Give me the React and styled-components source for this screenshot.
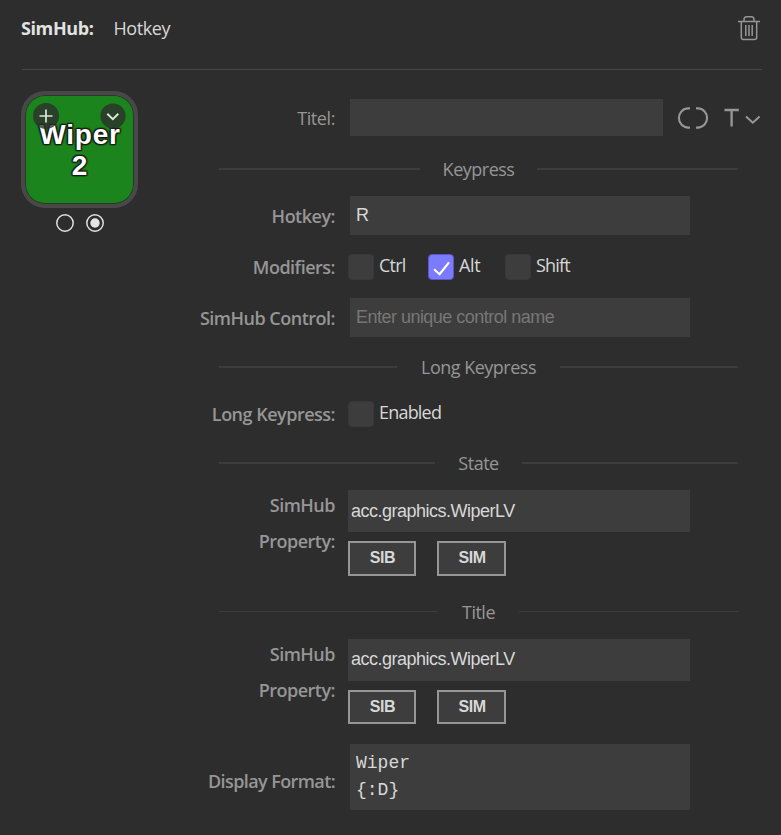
import React from "react";
import styled, { createGlobalStyle } from "styled-components";

const Global = createGlobalStyle`
  *, *::before, *::after { box-sizing: border-box; }
  body { margin: 0; background: #2d2d2d; }
`;

const ui = `"Segoe UI", "Open Sans", "Noto Sans", sans-serif`;
const arial = `"Liberation Sans", Arial, sans-serif`;

const Panel = styled.main`
  width: 781px;
  height: 835px;
  overflow: hidden;
  background: #2d2d2d;
  color: #d8d8d8;
  font: 400 18px/24px ${ui};
`;

const Header = styled.header`
  display: flex;
  align-items: center;
  height: 70px;
  margin: 0 19px 0 22px;
  padding-bottom: 13px;
  border-bottom: 1px solid #484848;
`;

const Plugin = styled.h1`
  margin: 0 20px 0 -1px;
  color: #e2e2e2;
  font: 700 18px/24px ${ui};
  letter-spacing: -0.4px;
`;

const Action = styled.span`
  flex: 1;
  font-size: 18px;
  letter-spacing: -0.4px;
`;

const Trash = styled.svg`
  width: 24px;
  height: 26px;
  margin-right: 1px;
`;

const Body = styled.div`
  display: flex;
`;

const Preview = styled.aside`
  width: 117px;
  margin: 21px 0 0 21px;
  display: flex;
  flex-direction: column;
  align-items: center;
`;

const Key = styled.div`
  position: relative;
  width: 117px;
  height: 117px;
  padding: 24px 0 0 1px;
  border: 4px solid #484848;
  border-radius: 24px;
  background: #1c841c;
  box-shadow: inset 0 0 0 1px #2d352d;
  color: #fff;
  text-align: center;
  font: 700 28px/31px ${arial};
  letter-spacing: 0.75px;
  white-space: pre-line;
  text-shadow: 0 0 2px #111, 0 0 2px #111, 0 0 2px #111, 1px 1px 1px #222, -1px -1px 1px #222,
    1px -1px 1px #222, -1px 1px 1px #222;
`;

const KeyBadge = styled.svg`
  position: absolute;
  top: 8px;
  ${(p) => p.$side}: 8px;
  width: 26px;
  height: 26px;
`;

const States = styled.div`
  display: flex;
  gap: 12px;
  margin-top: 6px;
`;

const StateDot = styled.svg`
  width: 18px;
  height: 18px;
`;

const Form = styled.section`
  width: 643px;
  padding-top: 29px;
`;

const Row = styled.div`
  display: flex;
  align-items: ${(p) => (p.$top ? "flex-start" : "center")};
  height: ${(p) => p.$h}px;
  margin-top: ${(p) => p.$mt || 0}px;
`;

const Label = styled.label`
  width: 197px;
  padding-top: ${(p) => p.$pt ?? 1}px;
  margin-top: ${(p) => p.$mt || 0}px;
  margin-right: ${(p) => p.$gap ?? 15}px;
  color: #969696;
  text-align: right;
  font-size: 18px;
  line-height: ${(p) => p.$lh || 24}px;
  font-weight: ${(p) => (p.$light ? 400 : 600)};
  letter-spacing: ${(p) => p.$ls ?? -0.5}px;
  white-space: pre-line;
`;

const Input = styled.input`
  width: ${(p) => p.$w || 340}px;
  height: 100%;
  padding: 0 6px;
  border: 0;
  border-radius: 0;
  outline: 0;
  background: #3d3d3d;
  color: #d8d8d8;
  font: 400 18px/24px ${arial};
  letter-spacing: -0.52px;
  &::placeholder { color: #777; opacity: 1; }
`;

const PropertyInput = styled(Input)`
  height: 42px;
  padding: 0 3px ${(p) => p.$pb}px;
  letter-spacing: -0.5px;
`;

const TextArea = styled.textarea`
  width: 340px;
  height: 66px;
  padding: 6px;
  border: 0;
  outline: 0;
  resize: none;
  background: #3d3d3d;
  color: #d8d8d8;
  font: 400 18px/27px "Courier New", "Liberation Mono", monospace;
`;

const TitleTools = styled.div`
  display: flex;
  align-items: center;
  margin-left: 14px;
`;

const ToolIcon = styled.svg`
  width: ${(p) => p.$w}px;
  height: 26px;
  margin-right: ${(p) => p.$mr || 0}px;
`;

const Divider = styled.div`
  display: flex;
  align-items: flex-start;
  height: ${(p) => p.$h}px;
  margin-left: 81px;
  width: 519px;
  padding-top: ${(p) => p.$pt}px;
  color: #969696;
  &::before, &::after {
    content: "";
    flex: 1;
    height: ${(p) => p.$line || 2}px;
    background: #3d3d3d;
  }
`;

const DividerText = styled.span`
  width: ${(p) => p.$w}px;
  margin-top: -11px;
  text-align: center;
  font-size: 18px;
  letter-spacing: -0.5px;
`;

const Option = styled.label`
  display: flex;
  align-items: center;
  width: ${(p) => p.$w}px;
  font-size: 18px;
  letter-spacing: ${(p) => p.$ls ?? -0.8}px;
`;

const Box = styled.span`
  display: grid;
  place-items: center;
  flex: none;
  width: 26px;
  height: 26px;
  margin-right: 5px;
  border: 1px solid ${(p) => (p.$on ? "#5a58c4" : "#393939")};
  border-radius: 4px;
  background: ${(p) => (p.$on ? "#7c7aff" : "#3d3d3d")};
`;

const OptionText = styled.span`
  margin-top: -5px;
`;

const PropertyField = styled.div`
  display: flex;
  flex-direction: column;
  width: 342px;
  input { width: 342px; }
`;

const Buttons = styled.div`
  display: flex;
  gap: 21px;
  margin-top: 9px;
`;

const SourceButton = styled.button`
  width: ${(p) => p.$w}px;
  height: ${(p) => p.$h}px;
  padding: 0 0 1px 1px;
  border: 2px solid #969696;
  background: #3d3d3d;
  color: #d8d8d8;
  font: 700 16px/20px ${arial};
  letter-spacing: -0.4px;
`;

function Check({ on, label, w, ls }) {
  return (
    <Option $w={w} $ls={ls}>
      <Box $on={on}>
        {on && (
          <svg width="24" height="24" viewBox="0 0 24 24" fill="none" stroke="#fff" strokeWidth="2.2">
            <path d="M5 14.2l5.6 5L20 7.4" />
          </svg>
        )}
      </Box>
      <OptionText>{label}</OptionText>
    </Option>
  );
}

function StateIndicator({ active }) {
  return (
    <StateDot viewBox="0 0 18 18">
      <circle cx="9" cy="9" r="8.2" fill="none" stroke="#e0e0e0" strokeWidth="1.5" />
      {active && <circle cx="9" cy="9" r="4.7" fill="#e4e4e4" />}
    </StateDot>
  );
}

function Property({ buttonHeight, textLift = 0 }) {
  return (
    <Row $h={51 + buttonHeight} $top>
      <Label $pt={0} $mt={-3} $lh={36} $gap={13}>{"SimHub\nProperty:"}</Label>
      <PropertyField>
        <PropertyInput $pb={textLift} defaultValue="acc.graphics.WiperLV" spellCheck={false} />
        <Buttons>
          <SourceButton $w={68} $h={buttonHeight}>SIB</SourceButton>
          <SourceButton $w={69} $h={buttonHeight}>SIM</SourceButton>
        </Buttons>
      </PropertyField>
    </Row>
  );
}

export default function App() {
  return (
    <Panel>
      <Global />
      <Header>
        <Plugin>SimHub:</Plugin>
        <Action>Hotkey</Action>
        <Trash viewBox="0 0 24 26" fill="none" stroke="#969696" strokeWidth="1.5">
          <path d="M1 6.5h22M7 6V4.5Q7 1.7 9.8 1.7h4.4Q17 1.7 17 4.5V6M4.3 6.5v15.7q0 2.3 2.3 2.3h10.8q2.3 0 2.3-2.3V6.5" />
          <path d="M8.8 10v11M12 10v11M15.2 10v11" />
        </Trash>
      </Header>
      <Body>
        <Preview>
          <Key>
            {"Wiper\n2"}
            <KeyBadge $side="left" viewBox="0 0 26 26">
              <circle cx="13" cy="13" r="13" fill="#2d2d2d" fillOpacity=".78" />
              <path d="M13 6.5v13M6.5 13h13" stroke="#dde5dd" strokeWidth="1.7" />
            </KeyBadge>
            <KeyBadge $side="right" viewBox="0 0 26 26">
              <circle cx="13" cy="13" r="12.6" fill="#2d2d2d" fillOpacity=".78" />
              <path d="M7.3 10.7l5.5 5.4 5.5-5.4" fill="none" stroke="#dde5dd" strokeWidth="2" />
            </KeyBadge>
          </Key>
          <States>
            <StateIndicator />
            <StateIndicator active />
          </States>
        </Preview>
        <Form>
          <Row $h={37}>
            <Label $light $ls={-0.4} $pt={0}>Titel:</Label>
            <Input $w={313} />
            <TitleTools>
              <ToolIcon $w={32} $mr={15} viewBox="0 0 32 26" fill="none" stroke="#969696" strokeWidth="2.1">
                <path d="M13 3.4h-1.8a9.3 9.6 0 0 0 0 19.2H13M19 3.4h1.8a9.3 9.6 0 0 1 0 19.2H19" />
              </ToolIcon>
              <ToolIcon $w={37} viewBox="0 0 37 26" fill="none" stroke="#969696">
                <path d="M0.5 5h14.3M7.6 5v16.4" strokeWidth="2.4" />
                <path d="M22 11.5l6.8 6.2 6.8-6.2" strokeWidth="2.1" />
              </ToolIcon>
            </TitleTools>
          </Row>
          <Divider $h={60} $pt={32}><DividerText $w={117}>Keypress</DividerText></Divider>
          <Row $h={39}>
            <Label>Hotkey:</Label>
            <Input defaultValue="R" />
          </Row>
          <Row $h={26} $mt={19}>
            <Label $gap={13} $pt={0} $mt={-1}>Modifiers:</Label>
            <Check label="Ctrl" w={80} />
            <Check label="Alt" w={77} ls={-0.4} on />
            <Check label="Shift" w={90} />
          </Row>
          <Row $h={39} $mt={18}>
            <Label>SimHub Control:</Label>
            <Input placeholder="Enter unique control name" />
          </Row>
          <Divider $h={64} $pt={29}><DividerText $w={163}>Long Keypress</DividerText></Divider>
          <Row $h={26}>
            <Label $gap={13} $pt={0} $mt={-1}>Long Keypress:</Label>
            <Check label="Enabled" w={120} />
          </Row>
          <Divider $h={63} $pt={35}><DividerText $w={87}>State</DividerText></Divider>
          <Property buttonHeight={35} />
          <Divider $h={63} $pt={35} $line={1}><DividerText $w={81}>Title</DividerText></Divider>
          <Property buttonHeight={34} textLift={2} />
          <Row $h={66} $mt={20}>
            <Label $pt={8} $ls={-0.6}>Display Format:</Label>
            <TextArea defaultValue={"Wiper\n{:D}"} spellCheck={false} />
          </Row>
        </Form>
      </Body>
    </Panel>
  );
}
